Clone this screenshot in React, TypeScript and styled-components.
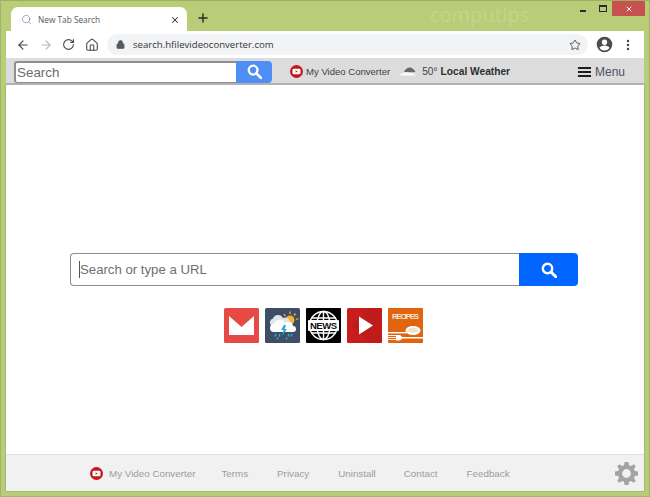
import React from "react"
import styled, { createGlobalStyle } from "styled-components"
import { ArrowLeft, ArrowRight, EllipsisVertical, Home, Lock, RotateCw, Search, Star, X, Plus } from "lucide-react"

const Global = createGlobalStyle`
  html, body { margin: 0; padding: 0; background: #b9cd79; }
  * { box-sizing: border-box; }
`

const Frame = styled.div`
  width: 650px;
  height: 497px;
  overflow: hidden;
  display: flex;
  flex-direction: column;
  background: #b9cd79;
  border: 1px solid #a3b468;
  border-top-color: #9fb064;
  font-family: "Liberation Sans", Arial, sans-serif;
`

const TabStrip = styled.div`
  height: 30px;
  flex: none;
  display: flex;
  align-items: flex-start;
  padding-left: 10px;
`

const Tab = styled.div`
  width: 176px;
  height: 25px;
  margin-top: 6px;
  padding: 0 7px 0 10px;
  background: #fff;
  border-radius: 7px 7px 0 0;
  display: flex;
  align-items: center;
  color: #5f6368;
`

const TabTitle = styled.span`
  flex: 1;
  margin-left: 6px;
  font-family: "Open Sans", sans-serif;
  font-size: 8.3px;
  color: #55585c;
`

const NewTab = styled.div`
  width: 16px;
  height: 16px;
  margin: 10px 0 0 9px;
  color: #2b2b2b;
  display: flex;
`

const Watermark = styled.div`
  width: 110px;
  margin: 2px 0 0 218px;
  font-family: "Open Sans", sans-serif;
  font-size: 19.5px;
  line-height: 24px;
  letter-spacing: 0.4px;
  color: #c3d58a;
`

const WindowControls = styled.div`
  margin-left: auto;
  display: flex;
  align-items: flex-start;
  padding-right: 4px;
`

const MinimizeBox = styled.div`
  width: 22px;
  height: 15px;
  display: flex;
  align-items: flex-end;
  justify-content: center;
  & > i { width: 6px; height: 2px; background: #2a2a2a; display: block; margin-bottom: 4px; }
`

const MaximizeBox = styled.div`
  width: 18px;
  height: 15px;
  display: flex;
  align-items: center;
  justify-content: center;
  & > i { width: 8px; height: 7px; border: 1px solid #2a2a2a; border-top-width: 2px; display: block; margin-top: -1px; }
`

const CloseBox = styled.div`
  width: 33px;
  height: 15px;
  background: #c75050;
  color: #fff;
  display: flex;
  align-items: center;
  justify-content: center;
`

const Toolbar = styled.div`
  height: 27px;
  flex: none;
  margin: 0 5px;
  background: #fff;
  display: flex;
  align-items: center;
  padding-left: 10px;
  color: #4a4d51;
`

const NavSlot = styled.div<{ $w?: number; $dim?: boolean }>`
  width: ${(p) => p.$w ?? 23}px;
  display: flex;
  color: ${(p) => (p.$dim ? "#b4b7bb" : "#44474b")};
`

const Omnibox = styled.div`
  width: 481px;
  height: 21px;
  margin-left: 2px;
  border-radius: 11px;
  background: #f1f3f4;
  display: flex;
  align-items: center;
  padding: 0 7px 0 9px;
`

const Url = styled.span`
  margin-left: 8px;
  flex: 1;
  font-family: "Open Sans", sans-serif;
  font-size: 9.6px;
  color: #33363a;
`

const AvatarSlot = styled.div`
  margin-left: 8px;
  width: 17px;
  height: 17px;
  display: flex;
`

const DotsSlot = styled.div`
  margin-left: 8px;
  display: flex;
  color: #45484c;
`

const ExtBar = styled.div`
  height: 27px;
  flex: none;
  margin: 0 5px;
  padding: 2px 0 0 8px;
  background: #dcdcdc;
  border-bottom: 2px solid #b1b1b1;
  display: flex;
  align-items: center;
`

const BarInput = styled.div`
  width: 222px;
  height: 22px;
  background: #fff;
  border: 1px solid #8f8f8f;
  border-top-width: 2px;
  border-left-width: 2px;
  border-right: none;
  border-radius: 3px 0 0 3px;
  padding-left: 1px;
  font-size: 13.4px;
  line-height: 19px;
  color: #6d6d6d;
`

const BarButton = styled.div`
  width: 36px;
  height: 22px;
  margin-right: 18px;
  background: #4d8ff5;
  border-radius: 0 4px 4px 0;
  display: flex;
  align-items: center;
  justify-content: center;
`

const BarLink = styled.span`
  margin: 0 10px 0 3px;
  font-size: 9.55px;
  color: #3d3d3d;
`

const Temp = styled.span`
  margin-left: 6px;
  font-size: 10.2px;
  color: #444;
`

const WeatherLabel = styled.b`
  margin-left: 3px;
  font-size: 10.2px;
  color: #2e2e2e;
`

const MenuWrap = styled.div`
  margin-left: auto;
  margin-right: 19px;
  display: flex;
  align-items: center;
  gap: 4px;
  font-size: 12px;
  color: #4a5363;
`

const Main = styled.div`
  flex: 1;
  margin: 0 5px;
  background: #fff;
  box-shadow: -1px 0 0 #a6b86b, 1px 0 0 #a6b86b;
  display: flex;
  flex-direction: column;
  align-items: center;
  padding-top: 168px;
`

const SearchRow = styled.div`
  width: 508px;
  height: 33px;
  margin-right: 2px;
  display: flex;
`

const SearchInput = styled.div`
  flex: 1;
  border: 1px solid #8d8d8d;
  border-right: none;
  border-radius: 4px 0 0 4px;
  padding-left: 8px;
  display: flex;
  align-items: center;
  font-size: 13.2px;
  color: #6f6f6f;
`

const Caret = styled.i`
  width: 1px;
  height: 17px;
  background: #555;
  display: block;
`

const SearchButton = styled.div`
  width: 59px;
  background: #0066ff;
  border-radius: 0 4px 4px 0;
  display: flex;
  align-items: center;
  justify-content: center;
`

const Shortcuts = styled.div`
  margin-top: 22px;
  margin-right: 4px;
  display: flex;
  gap: 6px;
`

const Shortcut = styled.svg`
  width: 35px;
  height: 35px;
  display: block;
`

const Footer = styled.div`
  height: 37px;
  flex: none;
  margin: 0 5px;
  background: #f1f1f1;
  border-top: 1px solid #dedede;
  box-shadow: -1px 0 0 #a6b86b, 1px 0 0 #a6b86b, 0 1px 0 #a6b86b;
  display: flex;
  align-items: center;
  padding-left: 84px;
  font-size: 9.8px;
  color: #9c9c9c;
`

const FooterLink = styled.span<{ $gap: number }>`
  margin-left: ${(p) => p.$gap}px;
`

const GearSlot = styled.div`
  margin-left: auto;
  margin-right: 6px;
  display: flex;
`

const BottomEdge = styled.div`
  height: 5px;
  flex: none;
`

const Magnifier = ({ size }: { size: number }) => (
  <svg width={size} height={size} viewBox="0 0 16 16" fill="none" stroke="#fff">
    <circle cx="6.500" cy="6.500" r="4.700" strokeWidth="2.400" />
    <path d="M10 10l4.800 4.800" strokeWidth="3" strokeLinecap="round" />
  </svg>
)

const VideoBadge = () => (
  <svg width="13" height="13" viewBox="0 0 13 13">
    <circle cx="6.500" cy="6.500" r="6.500" fill="#c4161c" />
    <rect x="2.500" y="3.800" width="8" height="5.400" rx="1.200" fill="#fff" />
    <path d="M5.600 5.300v2.400l2-1.200z" fill="#c4161c" />
  </svg>
)

const GearIcon = () => (
  <svg width="23" height="23" viewBox="0 0 24 24" fill="#a3a3a3">
    <path
      fillRule="evenodd"
      d="M10 0h4l.6 3.300 2.100.9 2.800-1.900 2.200 2.200-1.900 2.800.9 2.100 3.300.6v4l-3.300.6-.9 2.100 1.900 2.800-2.200 2.200-2.800-1.900-2.100.9-.6 3.300h-4l-.6-3.300-2.100-.9-2.800 1.900-2.200-2.200 1.900-2.800-.9-2.100-3.300-.6v-4l3.300-.6.9-2.100-1.900-2.800 2.200-2.200 2.800 1.900 2.100-.9zM12 7.400a4.600 4.600 0 1 0 0 9.200 4.600 4.600 0 0 0 0-9.200z"
    />
  </svg>
)

const AvatarIcon = () => (
  <svg width="17" height="17" viewBox="0 0 24 24" fill="#4a4d51">
    <path d="M12 1a11 11 0 1 0 0 22 11 11 0 0 0 0-22zm0 4a3.800 3.800 0 1 1 0 7.600A3.800 3.800 0 0 1 12 5zm0 15.600a8.600 8.600 0 0 1-7-3.600c.1-2.300 4.700-3.600 7-3.600s6.900 1.300 7 3.600a8.600 8.600 0 0 1-7 3.600z" />
  </svg>
)

const CloudIcon = () => (
  <svg width="16" height="9" viewBox="0 0 16 9">
    <path d="M4 5C5 2 8 0 10.500.5c2 .4 3.500 2 5 4.500-2 .5-4 .3-5.500.3z" fill="#6a6a6a" />
    <path d="M0 8.500c.3-1.800 2-2.800 3.500-2.500 2-1 5-1 6.500 0 2-.5 4.500.5 5.500 2.500z" fill="#fafafa" />
  </svg>
)

const MenuIcon = () => (
  <svg width="13" height="10" viewBox="0 0 13 10" fill="#1e1e1e">
    <rect width="13" height="2" />
    <rect y="4" width="13" height="2" />
    <rect y="8" width="13" height="2" />
  </svg>
)

const GmailTile = () => (
  <Shortcut viewBox="0 0 35 35">
    <rect width="35" height="35" rx="1.500" fill="#e64a45" />
    <path d="M5 8l12.500 11L30 8v19H5z" fill="#fff" />
  </Shortcut>
)

const WeatherTile = () => (
  <Shortcut viewBox="0 0 35 35">
    <rect width="35" height="35" rx="1.500" fill="#3f4d66" />
    <circle cx="25" cy="12" r="4.500" fill="#f3b62e" />
    <path d="M19 6l1.200 2M25 3.500V6M30.500 5.500L29 7.500M33.500 10.500L31 11.500" stroke="#f3b62e" strokeWidth="1.300" />
    <path d="M7 18a4 4 0 0 1 1-7.500A5.500 5.500 0 0 1 18 10a5 5 0 0 1 7 3.500 3 3 0 0 1 2 4.500z" fill="#dfe4ea" />
    <path d="M9 24a4 4 0 0 1 0-8 6 6 0 0 1 11-1 5 5 0 0 1 8 3 3 3 0 0 1 0 6z" fill="#fff" />
    <path d="M19 17l-3 5h2.500L17 28l5-7h-2.500l1.500-4z" fill="#1fa8e0" />
    <path d="M11 26l-1 2.500M15 26l-1 2.500M13 29.500l-1 2M24 26l-1 2.500M27 26l-1 2.500M22 29.500l-1 2" stroke="#28b4ea" strokeWidth="1.300" />
  </Shortcut>
)

const NewsTile = () => (
  <Shortcut viewBox="0 0 35 35">
    <rect width="35" height="35" rx="1" fill="#000" />
    <g fill="none" stroke="#fff" strokeWidth="1.400">
      <circle cx="17.500" cy="17.500" r="14" />
      <ellipse cx="17.500" cy="17.500" rx="6.500" ry="14" />
      <path d="M17.500 3.500v28M5.500 10h24M5.500 25h24" />
    </g>
    <rect x="2" y="12" width="31" height="11" rx="1" fill="#fff" />
    <text x="17.500" y="21.300" textAnchor="middle" fontFamily="Liberation Sans" fontWeight="700" fontSize="9.500" fill="#111" textLength="27">
      NEWS
    </text>
  </Shortcut>
)

const VideoTile = () => (
  <Shortcut viewBox="0 0 35 35">
    <rect width="35" height="35" rx="1.500" fill="#c81d1d" />
    <path d="M35 0H24L5 17.500 24 35h11z" fill="#b91a1a" opacity="0.6" />
    <path d="M12 8.500l14 9-14 9z" fill="#fff" />
  </Shortcut>
)

const RecipesTile = () => (
  <Shortcut viewBox="0 0 35 35">
    <rect width="35" height="35" rx="1" fill="#e0650f" />
    <text x="17.500" y="11" textAnchor="middle" fontFamily="Liberation Sans" fontWeight="700" fontSize="7.800" fill="#f6e4d2" textLength="27">
      RECIPES
    </text>
    <ellipse cx="25" cy="22.500" rx="7.500" ry="4.500" fill="#fff" />
    <ellipse cx="25" cy="22" rx="4.800" ry="2.600" fill="#eedfcf" />
    <rect x="0" y="24" width="19" height="1.400" fill="#fff" />
    <path d="M0 27.500h9M0 29.500h9M0 31.500h9" stroke="#fff" strokeWidth="0.900" />
    <path d="M8 27h3a3 3 0 0 1 3 2h21v1.400H14a3 3 0 0 1-3 2H8z" fill="#fff" />
  </Shortcut>
)

const App: React.FC = () => (
  <Frame>
    <Global />
    <TabStrip>
      <Tab>
        <Search size={11} strokeWidth={1.6} color="#7d8fa8" />
        <TabTitle>New Tab Search</TabTitle>
        <X size={10} strokeWidth={2.5} color="#333" />
      </Tab>
      <NewTab>
        <Plus size={14} strokeWidth={2.5} />
      </NewTab>
      <Watermark>computips</Watermark>
      <WindowControls>
        <MinimizeBox>
          <i />
        </MinimizeBox>
        <MaximizeBox>
          <i />
        </MaximizeBox>
        <CloseBox>
          <X size={8} strokeWidth={3} />
        </CloseBox>
      </WindowControls>
    </TabStrip>
    <Toolbar>
      <NavSlot>
        <ArrowLeft size={14} strokeWidth={2} />
      </NavSlot>
      <NavSlot $dim>
        <ArrowRight size={14} strokeWidth={2} />
      </NavSlot>
      <NavSlot>
        <RotateCw size={13} strokeWidth={2} />
      </NavSlot>
      <NavSlot $w={20}>
        <Home size={14} strokeWidth={1.8} />
      </NavSlot>
      <Omnibox>
        <Lock size={9} strokeWidth={3} fill="#55585c" color="#55585c" />
        <Url>search.hfilevideoconverter.com</Url>
        <Star size={12} strokeWidth={1.8} color="#44474b" />
      </Omnibox>
      <AvatarSlot>
        <AvatarIcon />
      </AvatarSlot>
      <DotsSlot>
        <EllipsisVertical size={14} strokeWidth={2.2} />
      </DotsSlot>
    </Toolbar>
    <ExtBar>
      <BarInput>Search</BarInput>
      <BarButton>
        <Magnifier size={15} />
      </BarButton>
      <VideoBadge />
      <BarLink>My Video Converter</BarLink>
      <CloudIcon />
      <Temp>50°</Temp>
      <WeatherLabel>Local Weather</WeatherLabel>
      <MenuWrap>
        <MenuIcon />
        Menu
      </MenuWrap>
    </ExtBar>
    <Main>
      <SearchRow>
        <SearchInput>
          <Caret />
          Search or type a URL
        </SearchInput>
        <SearchButton>
          <Magnifier size={16} />
        </SearchButton>
      </SearchRow>
      <Shortcuts>
        <GmailTile />
        <WeatherTile />
        <NewsTile />
        <VideoTile />
        <RecipesTile />
      </Shortcuts>
    </Main>
    <Footer>
      <VideoBadge />
      <FooterLink $gap={6}>My Video Converter</FooterLink>
      <FooterLink $gap={26}>Terms</FooterLink>
      <FooterLink $gap={29}>Privacy</FooterLink>
      <FooterLink $gap={29}>Uninstall</FooterLink>
      <FooterLink $gap={28}>Contact</FooterLink>
      <FooterLink $gap={29}>Feedback</FooterLink>
      <GearSlot>
        <GearIcon />
      </GearSlot>
    </Footer>
    <BottomEdge />
  </Frame>
)

export default App
